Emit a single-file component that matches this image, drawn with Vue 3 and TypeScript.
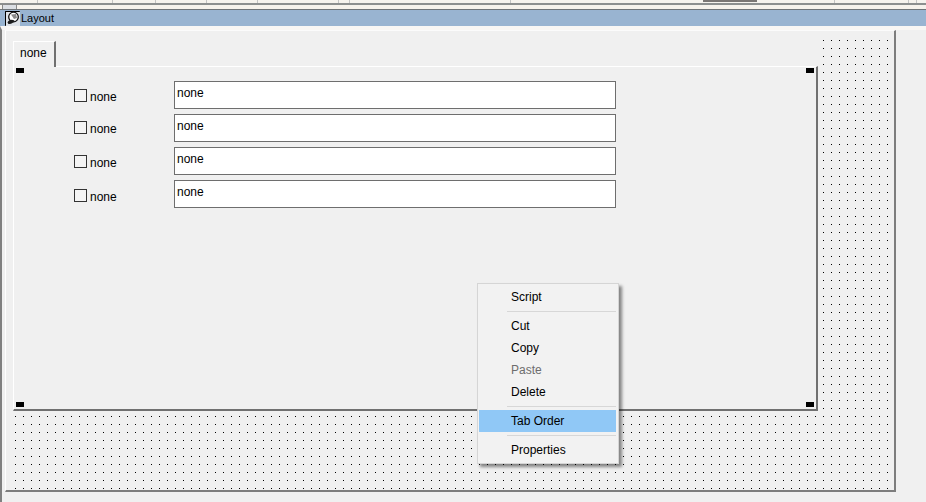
<script setup lang="ts">
interface Row { label: string; value: string; checkTop: number }
interface MenuEntry { label?: string; disabled?: boolean; active?: boolean; separator?: boolean }

const rows: Row[] = [
  { label: 'none', value: 'none', checkTop: 8 },
  { label: 'none', value: 'none', checkTop: 7 },
  { label: 'none', value: 'none', checkTop: 8 },
  { label: 'none', value: 'none', checkTop: 9 },
]

const menu: MenuEntry[] = [
  { label: 'Script' },
  { separator: true },
  { label: 'Cut' },
  { label: 'Copy' },
  { label: 'Paste', disabled: true },
  { label: 'Delete' },
  { separator: true },
  { label: 'Tab Order', active: true },
  { separator: true },
  { label: 'Properties' },
]

const ticks = [37, 112, 155, 206, 257, 338, 349, 510, 834, 908, 916]
</script>

<template>
  <div class="app">
    <div class="top-strip">
      <span v-for="t in ticks" :key="t" class="tick" :style="{ left: t + 'px' }"></span>
      <span class="mini-tab"></span>
      <span class="mini-bar"></span>
    </div>
    <div class="title-bar">
      <svg class="title-icon" width="15" height="15" viewBox="0 0 15 15">
        <path d="M0.5 14.5 V0.5 H14.5" fill="#dfe3e8" stroke="#000" />
        <rect x="1" y="1" width="14" height="14" fill="#dfe3e8" />
        <path d="M0.5 14.5 V0.5 H14.5" fill="none" stroke="#000" />
        <circle cx="8.5" cy="6" r="4.8" fill="#fff" stroke="#111" stroke-width="1.3" />
        <path d="M2.5 11.5 C3.5 8.5 7 8 9.5 9.5 C8.5 12 6 13.5 3.5 13 Z" fill="#1c1c1c" />
        <path d="M6 3.5 L11 3 L12 7 L9 8 Z" fill="#8a8a8a" />
      </svg>
      <span class="title-text">Layout</span>
    </div>
    <div class="workspace">
      <div class="canvas">
        <div class="dots">
          <div class="panel-wrap">
            <div class="tab"><span>none</span></div>
            <div class="panel">
              <span class="handle tl"></span>
              <span class="handle tr"></span>
              <span class="handle bl"></span>
              <span class="handle br"></span>
              <div v-for="(row, i) in rows" :key="i" class="row">
                <div class="check-field" :style="{ marginTop: row.checkTop + 'px' }">
                  <span class="box"></span>
                  <span class="check-label">{{ row.label }}</span>
                </div>
                <div class="input">{{ row.value }}</div>
              </div>
            </div>
          </div>
        </div>
      </div>
    </div>
    <div class="context-menu">
      <template v-for="(entry, i) in menu" :key="i">
        <div v-if="entry.separator" class="sep"></div>
        <div v-else class="item" :class="{ disabled: entry.disabled, active: entry.active }">{{ entry.label }}</div>
      </template>
    </div>
  </div>
</template>

<style>
html, body { margin: 0; background: #f0f0f0; }
</style>

<style scoped>
.app {
  position: relative;
  width: 926px;
  height: 502px;
  overflow: hidden;
  background: #f0f0f0;
  font-family: "Liberation Sans", Arial, sans-serif;
  font-size: 12px;
  color: #000;
}
.top-strip {
  position: relative;
  height: 10px;
  box-sizing: border-box;
  background: linear-gradient(#f6f3ee 0 3px, #8c8f8f 3px 5px, #f6f2ec 5px 9px);
  border-bottom: 1px solid #6f7478;
}
.tick {
  position: absolute;
  top: 0;
  width: 1px;
  height: 3px;
  background: #c4c4c4;
}
.mini-tab {
  position: absolute;
  left: 2px;
  top: 4px;
  width: 15px;
  height: 5px;
  box-sizing: border-box;
  border: 1px solid #8a8a8a;
  border-bottom: 0;
  background: #dcdfe4;
}
.mini-bar {
  position: absolute;
  left: 703px;
  top: 0;
  width: 54px;
  height: 2px;
  background: #7a7674;
}
.title-bar {
  display: flex;
  align-items: center;
  height: 16px;
  padding-left: 5px;
  background: #99b4d1;
}
.title-icon { flex: none; }
.title-text { margin-left: 1px; font-size: 11px; }
.workspace {
  height: 476px;
  box-sizing: border-box;
  border-top: 4px solid #f8f6f4;
  border-left: 2px solid #808080;
}
.canvas {
  width: 891px;
  height: 462px;
  margin-left: 3px;
  box-sizing: border-box;
  padding: 7px 0 0 7px;
  border-top: 1px solid #fbfbfb;
  border-left: 1px solid #fff;
  border-right: 2px solid #7d7d7d;
  border-bottom: 2px solid #7d7d7d;
}
.dots {
  height: 100%;
  background-color: #f0f0f0;
  background-image: radial-gradient(circle at 0.5px 0.5px, #000 0.7px, transparent 0.7px);
  background-size: 8px 8px;
  background-position: 2px 2px;
}
.panel-wrap {
  width: 805px;
  padding-top: 3px;
  background: #f0f0f0;
}
.tab {
  position: relative;
  z-index: 1;
  width: 43px;
  height: 26px;
  margin-bottom: -1px;
  box-sizing: border-box;
  background: #f0f0f0;
  border-top: 1px solid #fff;
  border-left: 1px solid #fff;
  border-right: 2px solid #707070;
  padding: 4px 0 0 6px;
  line-height: 15px;
}
.panel {
  position: relative;
  box-sizing: border-box;
  height: 345px;
  padding: 14px 0 0 60px;
  border-top: 1px solid #fff;
  border-left: 1px solid #fff;
  border-right: 2px solid #707070;
  border-bottom: 2px solid #707070;
  background: #f0f0f0;
}
.handle {
  position: absolute;
  width: 8px;
  height: 5px;
  background: #000;
}
.handle.tl { left: 2px; top: 1px; }
.handle.tr { right: 2px; top: 1px; }
.handle.bl { left: 2px; bottom: 2px; }
.handle.br { right: 2px; bottom: 2px; }
.row {
  display: flex;
  align-items: flex-start;
  height: 33px;
}
.check-field {
  display: flex;
  align-items: center;
  width: 100px;
  height: 13px;
}
.box {
  flex: none;
  box-sizing: border-box;
  width: 13px;
  height: 13px;
  border: 1px solid #333;
  background: #f4f4f4;
}
.check-label { margin-left: 3px; position: relative; top: 1px; }
.input {
  box-sizing: border-box;
  width: 442px;
  height: 28px;
  padding: 4px 0 0 2px;
  border: 1px solid #6e6e6e;
  background: #fff;
  line-height: 15px;
}
.context-menu {
  position: absolute;
  left: 477px;
  top: 283px;
  width: 142px;
  box-sizing: border-box;
  padding: 2px 2px 2px 1px;
  background: #f2f2f2;
  border: 1px solid #d5d5d5;
  box-shadow: 3px 3px 3px rgba(0, 0, 0, 0.45);
}
.item {
  height: 22px;
  line-height: 22px;
  padding-left: 32px;
}
.item.disabled { color: #6d6d6d; }
.item.active { background: #90c8f6; }
.sep {
  height: 1px;
  margin: 3px 0 3px 28px;
  background: #d7d7d7;
}
</style>
